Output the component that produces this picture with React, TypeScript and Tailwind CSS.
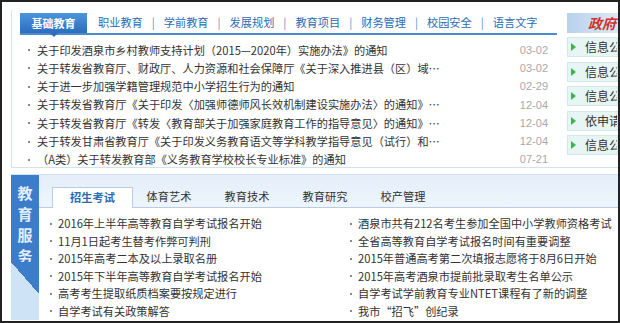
import React from "react";

const topNews = [
  { title: "关于印发酒泉市乡村教师支持计划（2015—2020年）实施办法》的通知", date: "03-02" },
  { title: "关于转发省教育厅、财政厅、人力资源和社会保障厅《关于深入推进县（区）域…", date: "03-02" },
  { title: "关于进一步加强学籍管理规范中小学招生行为的通知", date: "02-29" },
  { title: "关于转发省教育厅《关于印发〈加强师德师风长效机制建设实施办法〉的通知》…", date: "12-04" },
  { title: "关于转发省教育厅《转发〈教育部关于加强家庭教育工作的指导意见〉的通知》…", date: "12-04" },
  { title: "关于转发甘肃省教育厅《关于印发义务教育语文等学科教学指导意见（试行）和…", date: "12-04" },
  { title: "（A类）关于转发教育部《义务教育学校校长专业标准》的通知", date: "07-21" },
];

const topTabs = ["职业教育", "学前教育", "发展规划", "教育项目", "财务管理", "校园安全", "语言文字"];

const govLinks = ["信息公开指南", "信息公开目录", "信息公开制度", "依申请公开", "信息公开年报"];

const serviceTabs = ["体育艺术", "教育技术", "教育研究", "校产管理"];

const examLeft = [
  "2016年上半年高等教育自学考试报名开始",
  "11月1日起考生替考作弊可判刑",
  "2015年高考二本及以上录取名册",
  "2015年下半年高等教育自学考试报名开始",
  "高考考生提取纸质档案要按规定进行",
  "自学考试有关政策解答",
];

const examRight = [
  "酒泉市共有212名考生参加全国中小学教师资格考试",
  "全省高等教育自学考试报名时间有重要调整",
  "2015年普通高考第二次填报志愿将于8月6日开始",
  "2015年高考酒泉市提前批录取考生名单公示",
  "自学考试学前教育专业NTET课程有了新的调整",
  "我市“招飞”创纪录",
];

function NewsRow({ title, date }: { title: string; date: string }) {
  return (
    <div className="h-[18.3px] flex items-center pl-[16px] pr-[9px] leading-none">
      <span className="w-[2px] h-[2px] bg-[#888] mr-[7px] shrink-0" />
      <span className="text-[11.2px] whitespace-nowrap">{title}</span>
      <span className="ml-auto text-[11px] text-[#a8a8a8] font-['Liberation_Sans',sans-serif]">{date}</span>
    </div>
  );
}

function ExamRow({ title }: { title: string }) {
  return (
    <div className="h-[17.5px] flex items-center pl-[11px] leading-none">
      <span className="w-[2px] h-[2px] bg-[#888] mr-[6px] shrink-0" />
      <span className="text-[11.2px] whitespace-nowrap">{title}</span>
    </div>
  );
}

export default function App() {
  return (
    <div className="w-[620px] h-[323px] border-2 border-[#222] bg-white overflow-hidden font-['Noto_Sans_CJK_SC','Noto_Sans',sans-serif] text-[#333]">
      {/* news block */}
      <div className="ml-[9px] mt-[8px] h-[158px] flex border-l border-b border-[#d4e2ee]">
        <div className="w-[545px] shrink-0 pt-[3px]">
          <div className="ml-[8px] h-[22px] flex items-end border-b-2 border-[#4b8bd0]">
            <div className="relative w-[67px] h-[20px] bg-[linear-gradient(#4c95de,#2c6dbf)] text-white text-[11px] font-bold flex items-center justify-center leading-none">
              基础教育
              <span className="absolute left-1/2 -translate-x-1/2 top-full border-x-[4px] border-x-transparent border-t-[4px] border-t-[#2c6dbf]" />
            </div>
            <div className="h-[20px] flex items-center ml-[11px] text-[11.2px] text-[#2b6cb5] leading-none">
              {topTabs.map((tab, i) => (
                <React.Fragment key={tab}>
                  {i > 0 && <span className="mx-[9px] text-[#5d92cc]">|</span>}
                  <span>{tab}</span>
                </React.Fragment>
              ))}
            </div>
          </div>
          <div className="pt-[6px]">
            {topNews.map((n) => (
              <NewsRow key={n.title} title={n.title} date={n.date} />
            ))}
          </div>
        </div>

        <div className="ml-[10px] flex-1 pt-[3px] overflow-hidden">
          <div className="h-[20px] bg-[linear-gradient(to_right,#b9d1ec,#dce8f6)] flex items-center pl-[21px] overflow-hidden">
            <span className="text-[14px] font-bold italic text-[#d2302c] whitespace-nowrap leading-none">政府信息公开</span>
          </div>
          <div className="mt-[4px] flex flex-col gap-[4.5px]">
            {govLinks.map((g) => (
              <div key={g} className="h-[20px] flex items-center bg-[#e7f5f5] border border-[#d2e9ea] pl-[3px] whitespace-nowrap overflow-hidden">
                <span className="border-y-[4px] border-y-transparent border-l-[5px] border-l-[#3db34f]" />
                <span className="ml-[9px] text-[12px] leading-none">{g}</span>
              </div>
            ))}
          </div>
        </div>
      </div>

      {/* service block */}
      <div className="ml-[9px] mt-[6px] h-[146px] flex border-t border-[#d3e2f0]">
        <div className="w-[28px] shrink-0 flex flex-col">
          <div className="h-[87px] bg-[#3b7dca] pt-[7px] flex flex-col items-center text-[15px] font-bold text-[#e3eefb] leading-[21px]">
            <span>教</span>
            <span>育</span>
            <span>服</span>
            <span>务</span>
          </div>
          <div className="h-[32px] bg-[linear-gradient(to_top_right,#cfe3f6_50%,#3b7dca_50%)]" />
          <div className="flex-1 bg-[#cfe3f6]" />
        </div>

        <div className="flex-1 flex flex-col">
          <div className="h-[34px] bg-[linear-gradient(#e4eefa,#eef5fc)] border-b border-[#b8cde2] flex items-end pl-[13px]">
            <div className="w-[81px] h-[21px] -mb-px bg-white border border-b-0 border-[#b8cde2] flex items-center justify-center text-[11.2px] font-bold text-[#2b6cb5] leading-none">
              招生考试
            </div>
            <div className="flex -ml-[3px]">
              {serviceTabs.map((t) => (
                <div key={t} className="w-[78px] h-[20px] flex items-center justify-center text-[11.2px] text-[#333] leading-none">
                  {t}
                </div>
              ))}
            </div>
          </div>
          <div className="grid grid-cols-[300px_1fr] pt-[7px]">
            <div>
              {examLeft.map((t) => (
                <ExamRow key={t} title={t} />
              ))}
            </div>
            <div>
              {examRight.map((t) => (
                <ExamRow key={t} title={t} />
              ))}
            </div>
          </div>
        </div>
      </div>
    </div>
  );
}
